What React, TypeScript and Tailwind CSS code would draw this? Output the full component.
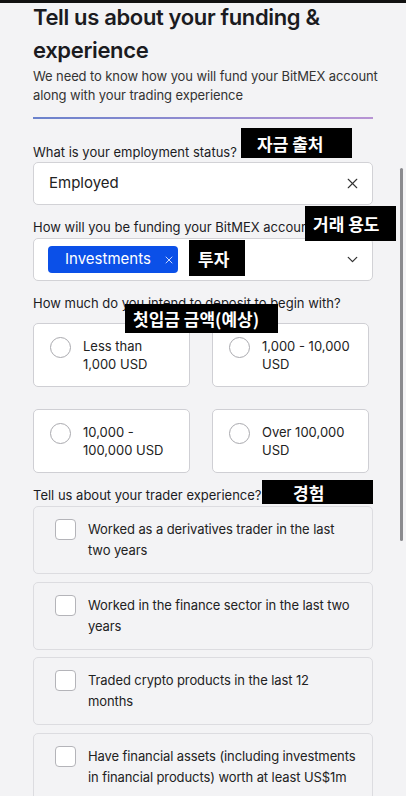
import { X, ChevronDown } from 'lucide-react';

const deposits = [
  ['Less than', '1,000 USD'],
  ['1,000 - 10,000', 'USD'],
  ['10,000 -', '100,000 USD'],
  ['Over 100,000', 'USD'],
];

const experiences = [
  ['Worked as a derivatives trader in the last', 'two years'],
  ['Worked in the finance sector in the last two', 'years'],
  ['Traded crypto products in the last 12', 'months'],
  ['Have financial assets (including investments', 'in financial products) worth at least US$1m'],
];

const notes = [
  { text: '자금 출처', box: 'left-[241px] top-[128px] w-[111px] h-[30px] pl-[16px]' },
  { text: '거래 용도', box: 'left-[305px] top-[206px] w-[91px] h-[35px] pl-[8px]' },
  { text: '투자', box: 'left-[189px] top-[240px] w-[56px] h-[36px] pl-[9px]' },
  { text: '첫입금 금액(예상)', box: 'left-[125px] top-[304px] w-[153px] h-[29px] pl-[8px]' },
  { text: '경험', box: 'left-[262px] top-[480px] w-[111px] h-[24px] pl-[31px]' },
];

export default function App() {
  return (
    <div className="relative h-[796px] w-full overflow-hidden bg-[#f3f3f5] text-[#1b1b1f] font-['Inter','Noto_Sans_CJK_KR',sans-serif]">
      <div className="absolute inset-x-0 top-0 h-[3px] bg-[#111]" />

      <div className="px-[33px] pt-[1px]">
        <h1 className="w-[340px] text-[22px] font-semibold leading-[33px] tracking-[-0.35px]">
          Tell us about your funding &amp;
          <br />
          experience
        </h1>
        <p className="whitespace-nowrap text-[13px] leading-[19px] tracking-[-0.1px] text-[#333]">
          We need to know how you will fund your BitMEX account
          <br />
          along with your trading experience
        </p>
        <div className="mt-[12px] h-[2px] w-[340px] bg-gradient-to-r from-[#6a82cc] to-[#b894d4]" />

        {/* employment */}
        <p className="mt-[24px] text-[13px] leading-[18px]">What is your employment status?</p>
        <div className="mt-[1px] flex h-[43px] w-[340px] items-center justify-between rounded-[5px] border border-[#d2d2d6] bg-white pl-[15px] pr-[11px]">
          <span className="text-[15px] text-[#222]">Employed</span>
          <X className="h-[17px] w-[17px] text-[#333]" strokeWidth={1.6} />
        </div>

        {/* funding */}
        <p className="mt-[13px] whitespace-nowrap text-[13px] leading-[18px]">How will you be funding your BitMEX account?</p>
        <div className="mt-[2px] flex h-[43px] w-[340px] items-center justify-between rounded-[5px] border border-[#d2d2d6] bg-white pl-[14px] pr-[11px]">
          <span className="flex h-[27px] w-[130px] items-center gap-[12px] rounded-[4px] bg-[#0b50e8] pl-[17px] text-[15px] text-white">
            Investments
            <X className="h-[12px] w-[12px] text-[#dfe8ff]" strokeWidth={1.8} />
          </span>
          <ChevronDown className="h-[17px] w-[17px] text-[#333]" strokeWidth={1.8} />
        </div>

        {/* deposit */}
        <p className="mt-[13px] text-[13px] leading-[18px]">How much do you intend to deposit to begin with?</p>
        <div className="mt-[11px] grid w-[336px] grid-cols-2 gap-x-[22px] gap-y-[22px]">
          {deposits.map((d) => (
            <div key={d[0]} className="flex h-[64px] items-start gap-[12px] rounded-[5px] border border-[#cfcfd4] bg-white pl-[16px] pr-[8px] pt-[13px]">
              <span className="h-[21px] w-[21px] shrink-0 rounded-full border border-[#a9a9ae] bg-white" />
              <span className="whitespace-nowrap text-[13px] leading-[18px] text-[#222]">
                {d[0]}
                <br />
                {d[1]}
              </span>
            </div>
          ))}
        </div>

        {/* experience */}
        <p className="mt-[13px] text-[13px] leading-[18px]">Tell us about your trader experience?</p>
        <div className="mt-[2px] flex w-[340px] flex-col gap-[7.5px]">
          {experiences.map((e) => (
            <div key={e[0]} className="flex min-h-[68px] items-start gap-[12px] rounded-[5px] border border-[#dcdce0] bg-[#f3f3f5] py-[12px] pl-[21px] pr-[8px]">
              <span className="h-[21px] w-[21px] shrink-0 rounded-[4px] border border-[#b4b4b9] bg-white" />
              <span className="whitespace-nowrap text-[13px] leading-[21px] tracking-[-0.1px] text-[#222]">
                {e[0]}
                <br />
                {e[1]}
              </span>
            </div>
          ))}
        </div>
      </div>

      {/* scrollbar */}
      <div className="absolute left-[400px] top-[168px] h-[373px] w-[3px] rounded-full bg-[#8a8a8e]" />

      {/* annotation labels */}
      {notes.map((n) => (
        <div
          key={n.text}
          className={`absolute flex items-center bg-black text-[17px] font-bold leading-none text-white font-['Noto_Sans_CJK_KR',sans-serif] ${n.box}`}
        >
          {n.text}
        </div>
      ))}
    </div>
  );
}
